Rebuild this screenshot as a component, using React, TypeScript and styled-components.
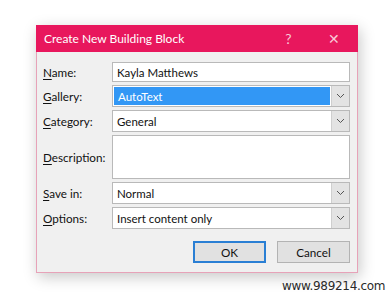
import styled, { createGlobalStyle } from "styled-components";

const GlobalStyle = createGlobalStyle`
  html, body {
    margin: 0;
    padding: 0;
    background: #ffffff;
  }
  body {
    font-family: Lato, "Noto Sans", sans-serif;
  }
`;

const Page = styled.div`
  width: 387px;
  height: 294px;
  position: relative;
  padding: 25px 0 0 36px;
  box-sizing: border-box;
  overflow: hidden;
`;

const Dialog = styled.div`
  width: 322px;
  height: 248px;
  box-sizing: border-box;
  border: 1px solid #e7a2b8;
  background: #f0f0f0;
  box-shadow: 2px 4px 14px rgba(0, 0, 0, 0.22);
  display: flex;
  flex-direction: column;
`;

const TitleBar = styled.div`
  height: 27px;
  margin: -1px -1px 0;
  background: #e8175d;
  color: #ffffff;
  display: flex;
  align-items: center;
  padding: 0 2px 0 8px;
  font-size: 12px;
`;

const Title = styled.div`
  flex: 1;
`;

const TitleButton = styled.div`
  width: 45px;
  text-align: center;
  font-size: 14px;
  color: #f8c7d7;
`;

const Body = styled.div`
  flex: 1;
  padding: 10px 6px 0 5px;
  display: flex;
  flex-direction: column;
`;

const Form = styled.div`
  display: grid;
  grid-template-columns: 70px 238px;
  row-gap: 3px;
  align-items: center;
`;

const Label = styled.div`
  font-size: 11.7px;
  color: #111;
  padding-left: 1px;
`;

const Key = styled.span`
  text-decoration: underline;
  text-underline-offset: 2px;
`;

const Field = styled.div<{ $h: number }>`
  height: ${(p) => p.$h}px;
  box-sizing: border-box;
  border: 1px solid #b9b9b9;
  background: #ffffff;
  display: flex;
  align-items: stretch;
  font-size: 11.5px;
  color: #111;
`;

const Value = styled.div<{ $selected?: boolean }>`
  flex: 1;
  display: flex;
  align-items: center;
  padding-left: 4px;
  margin: ${(p) => (p.$selected ? "1px" : "0")};
  background: ${(p) => (p.$selected ? "#3297f5" : "transparent")};
  color: ${(p) => (p.$selected ? "#ffffff" : "#111")};
`;

const Arrow = styled.div`
  width: 17px;
  background: #e3e3e3;
  border-left: 1px solid #cfcfcf;
  display: flex;
  align-items: center;
  justify-content: center;
`;

const Buttons = styled.div`
  display: flex;
  justify-content: flex-end;
  gap: 11px;
  margin: 12px 1px 0 0;
`;

const Button = styled.div<{ $default?: boolean }>`
  width: 73px;
  height: 22px;
  box-sizing: border-box;
  border: ${(p) => (p.$default ? "2px solid #2a7fd4" : "1px solid #b3b3b3")};
  background: #e1e1e1;
  display: flex;
  align-items: center;
  justify-content: center;
  font-size: 11.7px;
  color: #111;
`;

const Watermark = styled.div`
  position: absolute;
  left: 282px;
  top: 279px;
  font-family: "DejaVu Sans", sans-serif;
  font-size: 12px;
  color: #2a2a2a;
  letter-spacing: -0.3px;
`;

const Chevron = () => (
  <svg width="9" height="6" viewBox="0 0 9 6">
    <path d="M1 1 L4.5 4.5 L8 1" fill="none" stroke="#555" strokeWidth="1" />
  </svg>
);

const Combo = ({ value, selected }: { value: string; selected?: boolean }) => (
  <Field $h={22}>
    <Value $selected={selected}>{value}</Value>
    <Arrow>
      <Chevron />
    </Arrow>
  </Field>
);

const App = () => {
  return (
    <>
      <GlobalStyle />
      <Page>
        <Dialog>
          <TitleBar>
            <Title>Create New Building Block</Title>
            <TitleButton>?</TitleButton>
            <TitleButton>✕</TitleButton>
          </TitleBar>
          <Body>
            <Form>
              <Label>
                <Key>N</Key>ame:
              </Label>
              <Field $h={20}>
                <Value>Kayla Matthews</Value>
              </Field>
              <Label>
                <Key>G</Key>allery:
              </Label>
              <Combo value="AutoText" selected />
              <Label>
                <Key>C</Key>ategory:
              </Label>
              <Combo value="General" />
              <Label>
                <Key>D</Key>escription:
              </Label>
              <Field $h={44} />
              <Label>
                <Key>S</Key>ave in:
              </Label>
              <Combo value="Normal" />
              <Label>
                <Key>O</Key>ptions:
              </Label>
              <Combo value="Insert content only" />
            </Form>
            <Buttons>
              <Button $default>OK</Button>
              <Button>Cancel</Button>
            </Buttons>
          </Body>
        </Dialog>
        <Watermark>www.989214.com</Watermark>
      </Page>
    </>
  );
};

export default App;
